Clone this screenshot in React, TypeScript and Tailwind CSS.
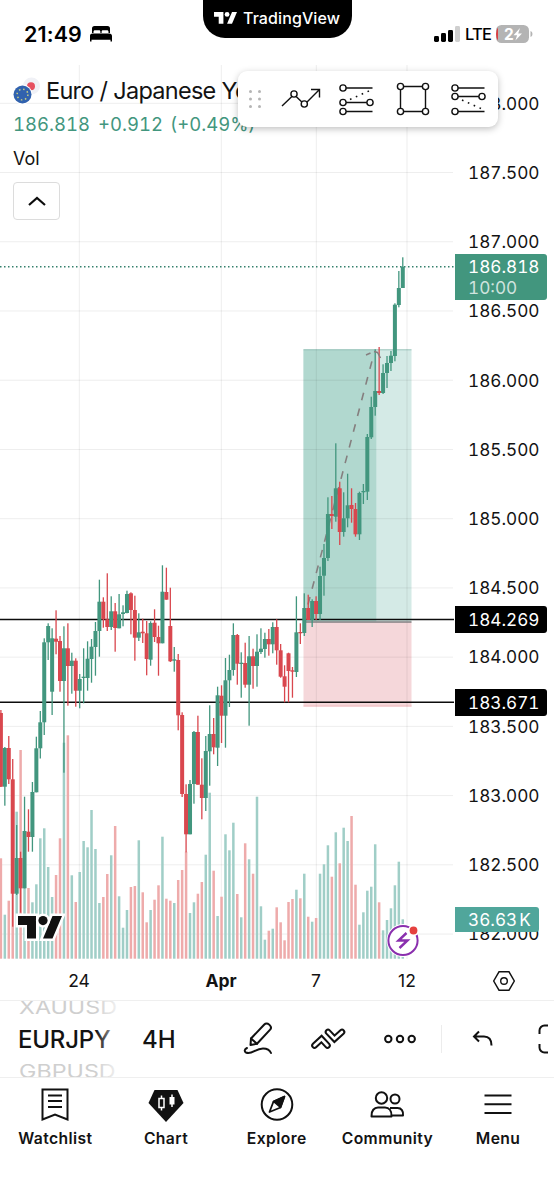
import type { ReactNode } from 'react'

type Bar = [up: number, high: number, top: number, bottom: number, low: number, volume: number]

const FONT = "font-['Inter','Liberation_Sans',sans-serif]"

const GREEN = '#42967e'
const RED = '#d9474e'

// one entry per 4h bar, values are in chart pixels
const BARS: Bar[] = [
  [0, 710, 713, 786.7, 787, 858.3],
  [1, 747, 748, 786.7, 805.7, 914.7],
  [0, 736, 748, 779.3, 784, 900.7],
  [0, 759, 779.3, 893.7, 926.7, 893],
  [1, 825, 858, 893.7, 895, 811.7],
  [0, 851.7, 858, 888.3, 912.7, 750],
  [1, 796.7, 831, 888.3, 888.3, 877],
  [0, 809.3, 831.7, 837, 851.7, 888],
  [1, 782, 792, 837, 851.7, 902.3],
  [1, 736.7, 748.3, 792.3, 792.3, 884.3],
  [1, 711, 722.3, 748.3, 758.5, 838.3],
  [1, 638.3, 642.3, 722.3, 735, 828.3],
  [1, 623.3, 626, 642.3, 660, 867],
  [1, 628.3, 638.3, 691.7, 715, 897],
  [0, 610.3, 638.7, 641.7, 654.3, 875],
  [0, 636, 641, 681, 691.7, 838.3],
  [1, 626.3, 648.3, 681, 772.7, 742.7],
  [0, 623.3, 648.3, 666, 705.7, 735.3],
  [1, 652.7, 660.7, 666, 693.7, 875.3],
  [0, 658.3, 660.7, 690.7, 706.7, 902],
  [1, 674, 679, 690.7, 708.3, 872],
  [1, 648.3, 676.7, 678, 703.3, 841],
  [1, 641.3, 658.7, 678, 690.7, 847.3],
  [1, 639, 646.7, 659, 682.7, 810],
  [1, 622, 631, 647, 675.7, 849],
  [1, 579.7, 601.7, 631, 656.7, 903],
  [0, 597.3, 601.7, 619.3, 627.7, 897],
  [0, 573.3, 619.3, 627, 631, 874],
  [1, 596.3, 611.3, 627, 630, 855.3],
  [0, 603, 611.3, 628, 651.7, 826],
  [1, 594, 614.3, 628.3, 628.3, 896.3],
  [1, 605.3, 612.3, 614, 626.3, 927.7],
  [1, 590.7, 594, 613, 613.3, 910],
  [0, 592.3, 593.3, 610, 634.3, 887],
  [0, 595.7, 610, 637.7, 660.7, 886],
  [1, 613.3, 632.3, 637.7, 641, 840.3],
  [0, 618.7, 631.7, 633.3, 643, 892.3],
  [0, 621, 633.3, 659, 675.3, 922.3],
  [1, 621.3, 623, 659.7, 665.7, 910],
  [0, 609.3, 622.7, 637, 642, 899.7],
  [0, 625.7, 637, 643.3, 675.7, 885.3],
  [1, 565.3, 591.7, 643.3, 643.3, 836.7],
  [0, 567.7, 592, 599.7, 599.7, 898.7],
  [0, 587.7, 626, 661.3, 662, 900.7],
  [1, 647, 659.3, 660.7, 671.7, 903],
  [0, 654, 660, 715.3, 730.3, 880],
  [0, 712.3, 715, 794, 797, 870],
  [0, 784.3, 794, 834.3, 852.3, 851.7],
  [1, 780, 784, 834.3, 834.3, 913],
  [1, 731, 732, 784, 803.7, 902.3],
  [0, 715.7, 732, 784.7, 784.7, 893.7],
  [0, 758.3, 784.7, 798, 819.3, 882],
  [1, 736, 751, 798, 811, 854.7],
  [1, 705.3, 734, 751.3, 785.7, 792.7],
  [0, 718, 734, 747.3, 754.3, 870.7],
  [1, 686.7, 695.3, 747.7, 766, 916],
  [0, 685.3, 695.7, 715.7, 743, 896.7],
  [1, 658, 680.3, 715.7, 747.7, 834.3],
  [1, 654.7, 670, 680.3, 707, 850.3],
  [1, 623.3, 635, 670, 675.7, 822.7],
  [0, 634, 635, 663.7, 684.7, 894],
  [1, 652.3, 662.7, 664, 697.7, 917.3],
  [0, 642.7, 663, 684.7, 687.7, 843.3],
  [1, 636, 656.3, 684.7, 725.7, 859.3],
  [0, 648.7, 656.3, 666, 688.7, 873.7],
  [1, 634.3, 651.7, 666, 686.7, 796.7],
  [1, 628.3, 648.7, 652, 654, 906.3],
  [1, 632.7, 639, 649, 657.7, 939.7],
  [0, 629, 639, 644.3, 655.7, 930.7],
  [1, 622.3, 627, 644.3, 653.3, 928.7],
  [0, 619.3, 627, 650.3, 664.7, 907.3],
  [0, 644, 650.3, 676.7, 677.7, 922.3],
  [0, 665.3, 676.3, 686.7, 702.3, 940.3],
  [0, 652.7, 653.3, 671, 702.3, 902],
  [0, 667, 670.3, 671.7, 697.7, 899],
  [1, 596.3, 632.3, 672, 677, 889.7],
  [0, 623.3, 632, 633.3, 644, 898.3],
  [1, 593.3, 608, 633, 636, 873.7],
  [0, 594.7, 608, 620, 620, 916.7],
  [1, 599.3, 601, 620, 627, 921.7],
  [0, 596.3, 601, 614, 620, 918],
  [1, 566.7, 576, 614, 620, 873.7],
  [1, 544, 558, 575.7, 595.7, 864.3],
  [1, 497.3, 514, 558, 561, 845.3],
  [0, 496, 514, 516, 529, 876.7],
  [1, 443.3, 488.3, 516.7, 521.7, 832.3],
  [0, 481.7, 488.3, 532, 545, 863.3],
  [1, 492.3, 518.3, 532, 536.7, 827.7],
  [1, 473.7, 505.3, 518.3, 527.3, 841],
  [0, 488.3, 505, 509, 522.7, 816],
  [0, 503, 509, 534.3, 536.7, 884.7],
  [1, 491.7, 493, 534.3, 540, 924.7],
  [1, 484, 491, 492.3, 504, 912.3],
  [1, 434, 437, 491.7, 500, 890.7],
  [1, 396.7, 407, 437.3, 439, 886.7],
  [1, 349.3, 391, 407, 415.7, 844.3],
  [0, 347, 391, 393, 395, 902.3],
  [1, 364.3, 373, 393, 394, 930.3],
  [1, 356, 363, 373, 388, 920],
  [1, 351, 355.7, 363, 371, 908.3],
  [1, 303.3, 304.7, 356, 361.3, 885.3],
  [1, 271, 288, 305, 307.3, 861.7],
  [1, 257.3, 266.7, 288, 288, 919.3],
]

const PRICES = [
  '188.000', '187.500', '187.000', '186.500', '186.000', '185.500', '185.000',
  '184.500', '184.000', '183.500', '183.000', '182.500', '182.000',
]

const barX = (index: number) => 0.9 + index * 3.94

const Logo = ({ className }: { className?: string }) => (
  <svg viewBox="0 0 44 23" className={className} fill="currentColor">
    <path d="M0 0h18v22.5H9V9H0z" />
    <circle cx="25" cy="4.6" r="4.6" />
    <path d="M34.5 0H44l-9.5 22.5H25z" />
  </svg>
)

const StatusBar = () => (
  <header className="relative flex h-[65px] shrink-0 items-start justify-between pl-6 pr-[21px]">
    <div className="mt-[22px] flex h-6 items-center">
      <span className="w-[61px] text-[21.5px] font-semibold tracking-[0.1px]">21:49</span>
      <svg viewBox="0 0 24 18" className="ml-[4px] h-[18px] w-6" fill="currentColor">
        <path d="M3 8V3.5A2.5 2.5 0 0 1 5.500 1h13A2.500 2.500 0 0 1 21 3.500V8h-1.500V6.800c0-1-.6-1.600-1.600-1.600H14c-1 0-1.400.6-1.400 1.600V8h-1.200V6.800c0-1-.4-1.600-1.400-1.600H6c-1 0-1.500.6-1.500 1.600V8z" />
        <path d="M1 16.500v-5A2.800 2.800 0 0 1 3.800 8.400h16.400a2.800 2.800 0 0 1 2.800 2.700v5.400h-1.500V14.800h-19v1.700z" />
      </svg>
    </div>
    <div className="absolute left-[203px] top-0 flex h-[38px] w-[149px] items-start rounded-b-[22px] bg-black pl-[11px] pt-[9px] text-white">
      <Logo className="mt-[3px] h-3 w-[23px]" />
      <span className="ml-[6px] text-[16px] leading-[19px] font-medium tracking-[0.1px]">TradingView</span>
    </div>
    <div className="mt-[24px] flex h-5 items-center">
      <svg viewBox="0 0 26 16" className="h-4 w-[26px]">
        <rect x="0" y="10" width="5" height="6" rx="1.4" />
        <rect x="7" y="7" width="5" height="9" rx="1.4" />
        <rect x="14" y="4" width="5" height="12" rx="1.4" />
        <rect x="21" y="0" width="5" height="16" rx="1.4" fill="#cfcfcf" />
      </svg>
      <span className="ml-[5px] w-[27px] text-[16.5px] font-medium tracking-[-0.8px]">LTE</span>
      <svg viewBox="0 0 37 18" className="ml-[4px] h-[18px] w-[37px]">
        <rect x="0" y="0" width="33" height="18" rx="5.5" fill="#b4b4b4" />
        <path d="M2 2.500Q0 5 0 9t2 6.500z" fill="#dd3f43" />
        <path d="M34.500 6q2 .6 2 3t-2 3z" fill="#b4b4b4" />
        <text x="8" y="14.5" fontSize="15.5" fontWeight="700" fill="#fff">2</text>
        <path d="M24 3 17.500 10.200h3.600l-1.700 5.300L26 8.600h-3.800z" fill="#fff" />
      </svg>
    </div>
  </header>
)

const PriceChart = () => (
  <svg viewBox="0 65 454 894" className="block h-[894px] w-[454px]">
    {/* Long position */}
    <rect x="303.5" y="349.5" width="108" height="272" fill="#d4eae6" />
    <rect x="303.5" y="349.5" width="72.8" height="272" fill="#b1d8cf" />
    <rect x="303.5" y="622" width="108" height="84.5" fill="#f5d7da" />
    <path d="M303.5 349.8H411.5" stroke="#8dbbb0" strokeWidth="0.8" />
    <path d="M303.5 706H411.5" stroke="#efb9bd" strokeWidth="1" />

    <g fill="#000" fillOpacity="0.07">
      {[79.3, 221.3, 316.3, 407].map((x) => (
        <rect key={x} x={x - 0.5} y="65" width="1" height="894" />
      ))}
      {PRICES.map((price, i) => (
        <rect key={price} x="0" y={102.8 + i * 69.23} width="453" height="1" />
      ))}
    </g>

    {/* Volume */}
    {BARS.map(([up, , , , , volume], i) => (
      <rect
        key={i}
        x={barX(i) - 1.25}
        y={volume}
        width="2.5"
        height={958.7 - volume}
        fill={up ? '#a0cec7' : '#eeabab'}
      />
    ))}

    {/* Trend arrow */}
    <path d="M308 604.5 372.5 359" stroke="#857f7f" strokeWidth="1.6" strokeDasharray="7.8 8.44" fill="none" />

    {/* Price lines */}
    <path d="M303.5 622H411.5" stroke="#7f7f80" strokeWidth="1.5" />
    <path d="M0 619.5H454M0 702.3H454" stroke="#0c0c0c" strokeWidth="1.5" />
    <path d="M0 266.8H454" stroke="#35806c" strokeWidth="1.4" strokeDasharray="1.5 2.5" />

    {/* Candles */}
    {BARS.map(([up, high, top, bottom, low], i) => (
      <g key={i} fill={up ? GREEN : RED}>
        <rect x={barX(i) - 0.65} y={high} width="1.3" height={low - high} />
        <rect x={barX(i) - 2} y={top} width="4" height={bottom - top} />
      </g>
    ))}
    <path d="M366 355l4.500-2M374 351.500l3.500 1 3 5.500" stroke="#857f7f" strokeWidth="1.5" fill="none" />
  </svg>
)

const Legend = () => (
  <div className="absolute left-[13px] top-[14px] w-[260px]">
    <div className="flex h-6 items-center">
      <svg viewBox="0 0 28 28" className="-mt-px h-7 w-7 shrink-0">
        <circle cx="18.5" cy="9" r="8.5" fill="#f0f1f6" />
        <circle cx="18" cy="9.2" r="4" fill="#e65060" />
        <circle cx="9.5" cy="17.5" r="10" fill="#fff" />
        <circle cx="9.5" cy="17.5" r="9" fill="#3162ae" />
        <circle cx="9.5" cy="17.5" r="5.4" fill="none" stroke="#c8cf82" strokeWidth="1.5" strokeDasharray="1.5 2.74" />
      </svg>
      <span className="ml-[5px] whitespace-nowrap text-[23.5px] tracking-[-0.72px] text-[#131313]">Euro / Japanese Yen</span>
    </div>
    <div className="mt-[10px] flex h-6 items-center whitespace-nowrap text-[18.5px] tabular-nums text-[#42967e]">
      <span className="w-[85px]">186.818</span>
      <span className="w-[72px]">+0.912</span>
      <span>(+0.49%)</span>
    </div>
    <p className="mt-[10px] h-6 text-[18px] leading-6 text-[#131313]">Vol</p>
    <button type="button" className="mt-[11px] flex h-[38px] w-[47px] items-center justify-center rounded-[4px] border-[1.5px] border-[#dcdcdc] bg-white">
      <svg viewBox="0 0 18 10" className="h-[10px] w-[18px]" fill="none" stroke="#0c0c0c" strokeWidth="2.2">
        <path d="m1 9 8-7 8 7" />
      </svg>
    </button>
  </div>
)

const ToolIcon = ({ children }: { children: ReactNode }) => (
  <svg viewBox="0 0 40 40" className="h-10 w-10 shrink-0" fill="none" stroke="#111" strokeWidth="1.4">
    {children}
  </svg>
)

const Handle = ({ x, y }: { x: number; y: number }) => <circle cx={x} cy={y} r="3.1" fill="#fff" />

const DrawingToolbar = () => (
  <div className="absolute left-[238px] top-[6px] flex h-[56px] w-[260px] items-center rounded-[9px] bg-white pl-[10px] shadow-[0_2px_7px_rgba(0,0,0,0.25)]">
    <svg viewBox="0 0 14 20" className="h-5 w-[14px]" fill="#b5b5b5">
      {[2.5, 10, 17.5].map((y) => (
        <g key={y}>
          <circle cx="2.5" cy={y} r="1.5" />
          <circle cx="11.5" cy={y} r="1.5" />
        </g>
      ))}
    </svg>
    <div className="ml-[19px] flex gap-4">
      <ToolIcon>
        <path d="M1 27 13 15.500 23.500 25.500 38.500 10.500M30 10.500h8.500V18.500" />
        <Handle x={13} y={15} />
        <Handle x={23.3} y={25} />
      </ToolIcon>
      <ToolIcon>
        <path d="M6 9h29.500M6 23.500h24M6 32.500h29.500" />
        <path d="m13 20.500 20-9" strokeWidth="1.6" strokeDasharray="1.6 4.8" />
        <Handle x={6} y={9} />
        <Handle x={6} y={23.5} />
        <Handle x={33} y={23.5} />
        <Handle x={6} y={32.5} />
      </ToolIcon>
      <ToolIcon>
        <path d="M7.500 7.500h25v25h-25z" />
        <Handle x={7.5} y={7.5} />
        <Handle x={32.5} y={7.5} />
        <Handle x={7.5} y={32.5} />
        <Handle x={32.5} y={32.5} />
      </ToolIcon>
      <ToolIcon>
        <path d="M6 9h29.500M6 17.500h24M6 32.500h29.500" />
        <path d="m13 21 20 9" strokeWidth="1.6" strokeDasharray="1.6 4.8" />
        <Handle x={6} y={9} />
        <Handle x={6} y={17.5} />
        <Handle x={33} y={17.5} />
        <Handle x={6} y={32.5} />
      </ToolIcon>
    </div>
  </div>
)

const PriceAxis = () => (
  <div className="relative flex-1 pt-[4px] text-[17.2px] tabular-nums text-[#131313]">
    {PRICES.map((price) => (
      <div key={price} className="flex h-[69.23px] items-center pl-[14px]">{price}</div>
    ))}
    <div className="absolute left-[1px] top-[189px] flex h-[46px] w-[92px] flex-col justify-center rounded-r-[3px] bg-[#42967e] pl-[13px] leading-[21px] text-white">
      <span>186.818</span>
      <span className="text-white/75">10:00</span>
    </div>
    <div className="absolute left-[1px] top-[541px] flex h-[27px] w-[92px] items-center rounded-r-[3px] bg-black pl-[13px] text-white">184.269</div>
    <div className="absolute left-[1px] top-[624px] flex h-[27px] w-[92px] items-center rounded-r-[3px] bg-black pl-[13px] text-white">183.671</div>
    <div className="absolute left-[1px] top-[842px] flex h-[25px] w-[84px] items-center rounded-r-[3px] bg-[#50a69b] pl-[13px] text-white">
      36.63<span className="ml-[2px]">K</span>
    </div>
  </div>
)

const TimeAxis = () => (
  <div className="flex h-[41px] shrink-0 items-center pt-[3px] text-[17.5px] text-[#131313]">
    <span className="ml-[49px] w-[60px] text-center">24</span>
    <span className="ml-[82px] w-[60px] text-center font-bold">Apr</span>
    <span className="ml-[35px] w-[60px] text-center">7</span>
    <span className="ml-[31px] w-[60px] text-center">12</span>
    <svg viewBox="0 0 22 20" className="ml-[56px] h-5 w-[22px]" fill="none" stroke="#111" strokeWidth="1.4">
      <path d="M6 .8h10L21.300 10 16 19.200H6L.7 10z" />
      <circle cx="11" cy="10" r="3.3" />
    </svg>
  </div>
)

const BottomToolbar = () => (
  <div className="flex h-[78px] shrink-0 items-center overflow-hidden border-y border-[#efefef] text-[#131313] *:shrink-0">
    <div className="relative ml-[19px] flex h-full w-[101px] flex-col justify-center">
      <span className="h-[22px] origin-left scale-x-[1.26] text-[18.5px] leading-[22px] text-[#cfcfcf]">XAUUSD</span>
      <span className="-ml-px mt-[8px] mb-[6px] h-[28px] text-[24px] leading-[28px] font-medium tracking-[-0.2px]">EURJPY</span>
      <span className="h-[22px] origin-left scale-x-[1.26] text-[18.5px] leading-[22px] text-[#cfcfcf]">GBPUSD</span>
      <div className="absolute -right-4 top-0 h-full w-10 bg-linear-to-r from-white/0 to-white to-75%" />
    </div>
    <span className="ml-[22px] mt-px w-[36px] text-[24px] font-medium">4H</span>
    <svg viewBox="0 0 30 34" className="ml-[65px] h-[34px] w-[30px]" fill="none" stroke="#111" strokeWidth="2" strokeLinejoin="round" strokeLinecap="round">
      <path d="m8 16.500 13.300-14a3.200 3.200 0 0 1 4.600-.1l1 1a3.200 3.200 0 0 1 0 4.500L14 21.800 7.500 23z" />
      <path d="m8 16.500 6 5.300" />
      <path d="M4 26c-2.500 1-3 3.500-1 4.500 6 2.500 9-4 17-4 4 0 7 2 8 4.500" />
    </svg>
    <svg viewBox="0 0 36 22" className="ml-[37px] h-[22px] w-9">
      <g fill="none" strokeLinecap="round" strokeLinejoin="miter">
        <path d="m4.500 17.500 7-6.500 6 6.500M18 4l6.500 6.800L32 4" stroke="#111" strokeWidth="6.6" />
        <path d="m4.500 17.500 7-6.500 6 6.500M18 4l6.500 6.800L32 4" stroke="#fff" strokeWidth="2.6" />
      </g>
    </svg>
    <svg viewBox="0 0 32 10" className="ml-[38px] h-[10px] w-8" fill="none" stroke="#111" strokeWidth="2">
      <circle cx="4.3" cy="5" r="3.2" />
      <circle cx="16" cy="5" r="3.2" />
      <circle cx="27.7" cy="5" r="3.2" />
    </svg>
    <div className="ml-[25px] h-7 w-px bg-[#ececec]" />
    <svg viewBox="0 0 22 18" className="ml-[30px] h-[18px] w-[22px]" fill="none" stroke="#111" strokeWidth="2">
      <path d="M7 1.500 2 6.500l5 5M2 6.500h10q7.500 0 7.500 9" />
    </svg>
    <svg viewBox="0 0 30 30" className="ml-[44px] h-[30px] w-[30px]" fill="none" stroke="#111" strokeWidth="2">
      <path d="M1.500 10V6.500a5 5 0 0 1 5-5H10M1.500 20v3.500a5 5 0 0 0 5 5H10" />
    </svg>
  </div>
)

interface NavItemProps {
  label: string
  children: ReactNode
}

const NavItem = ({ label, children }: NavItemProps) => (
  <button type="button" className="flex w-[110.7px] shrink-0 flex-col items-center">
    <svg viewBox="0 0 36 36" className="h-9 w-9" fill="none" stroke="#111" strokeWidth="2">
      {children}
    </svg>
    <span className="mt-[7px] text-[15.7px] leading-5 font-semibold tracking-[0.4px] whitespace-nowrap text-[#131313]">{label}</span>
  </button>
)

const BottomNav = () => (
  <nav className="flex h-[122px] shrink-0 pt-[8px]">
    <NavItem label="Watchlist">
      <path d="M5.500 3.500h25v30L18 28.500 5.500 33.500z" />
      <path d="M11 9.500h14M11 15h14M11 21h14" />
    </NavItem>
    <NavItem label="Chart">
      <path d="M6.500 4h23L35.500 17 18 36 .5 17z" fill="#111" stroke="none" />
      <path d="M13.500 9.500v3M13.500 21.500v3M11 12.500h5v9h-5zM24 8.500V21" stroke="#fff" strokeWidth="1.5" />
      <path d="M21.500 11h5v7.500h-5z" fill="#fff" stroke="none" />
    </NavItem>
    <NavItem label="Explore">
      <circle cx="18" cy="18.5" r="15.3" />
      <path d="m25.500 10.500-4 11-7-6z" fill="#111" strokeWidth="1.5" strokeLinejoin="round" />
      <path d="m25.500 10.500-11 5-4 10.500 11-4.500z" strokeWidth="1.8" strokeLinejoin="round" />
    </NavItem>
    <NavItem label="Community">
      <circle cx="12.5" cy="12" r="5.7" />
      <circle cx="26" cy="13" r="4.5" />
      <path d="M2.500 30.500c-.5-6 3-9 6.500-9h7c4 0 7 3 6.500 9zM21 22h7.500c4 0 6 3 5.500 7.500H23" strokeLinejoin="round" />
    </NavItem>
    <NavItem label="Menu">
      <path d="M4.500 9.500h27M4.500 18.300h27M4.500 27h27" />
    </NavItem>
  </nav>
)

export default function App() {
  return (
    <div className={`flex h-[1200px] w-[554px] flex-col overflow-hidden bg-white text-black ${FONT}`}>
      <StatusBar />
      <main className="relative flex h-[894px] shrink-0">
        <PriceChart />
        <PriceAxis />
        <Legend />
        <DrawingToolbar />
        <svg viewBox="-3 -3 50 29" className="absolute left-[15px] top-[848px] h-[29px] w-[50px]" fill="#111" stroke="#fff" strokeWidth="5" paintOrder="stroke">
          <path d="M0 0h18v22.500H9V9H0zM34.500 0H44l-9.500 22.500H25z" />
          <circle cx="25" cy="4.6" r="4.6" />
        </svg>
        <svg viewBox="0 0 34 34" className="absolute left-[386px] top-[858px] h-[34px] w-[34px]">
          <circle cx="17" cy="17.5" r="16.5" fill="#fff" />
          <circle cx="17" cy="17.5" r="14.6" fill="none" stroke="#8a2fae" strokeWidth="2" />
          <path d="m20.500 10-8 7.500h9l-8 7.500" fill="none" stroke="#8a2fae" strokeWidth="2.4" />
          <circle cx="27.5" cy="7.5" r="5.5" fill="#fff" />
          <circle cx="27.5" cy="7.5" r="3.9" fill="#e5413f" />
        </svg>
      </main>
      <TimeAxis />
      <BottomToolbar />
      <BottomNav />
    </div>
  )
}
